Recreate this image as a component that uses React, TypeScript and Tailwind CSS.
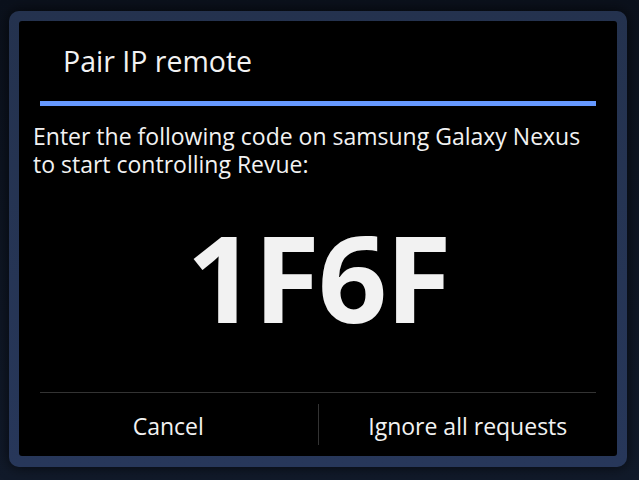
export default function App() {
  return (
    <div
      className="w-[639px] h-[480px] overflow-hidden bg-gradient-to-b from-[#0b111c] to-[#111a2a] pt-[11px] pl-[9px]"
      style={{ fontFamily: '"Open Sans", "Noto Sans", sans-serif' }}
    >
      {/* dialog frame */}
      <div className="w-[618px] h-[456px] rounded-[10px] bg-gradient-to-b from-[#24324e] to-[#27375a] p-[10px] shadow-[0_0_14px_rgba(0,0,0,0.7)]">
        <div className="w-[598px] h-[435px] rounded-[3px] bg-black flex flex-col text-[#f2f2f2]">
          <div className="h-[80px] pl-[44px] pt-[22px] text-[28.5px] leading-[36px]">Pair IP remote</div>
          <div className="mx-[21px] h-[5px] bg-[#6699ff]" />
          <div className="pl-[14px] pt-[16px] text-[23px] leading-[28px]">
            <div>Enter the following code on samsung Galaxy Nexus</div>
            <div>to start controlling Revue:</div>
          </div>
          <div className="flex justify-center pt-[48px] text-[121px] font-bold leading-[100px] tracking-[-2px]">
            1F6F
          </div>
          <div className="flex-1" />
          <div className="mx-[21px] h-px bg-[#333333]" />
          <div className="h-[63px] flex">
            <div className="flex-1 flex items-center justify-center text-[23px] pt-[4px]">Cancel</div>
            <div className="w-px my-[11px] bg-[#333333]" />
            <div className="flex-1 flex items-center justify-center text-[23px] pt-[4px]">Ignore all requests</div>
          </div>
        </div>
      </div>
    </div>
  );
}
